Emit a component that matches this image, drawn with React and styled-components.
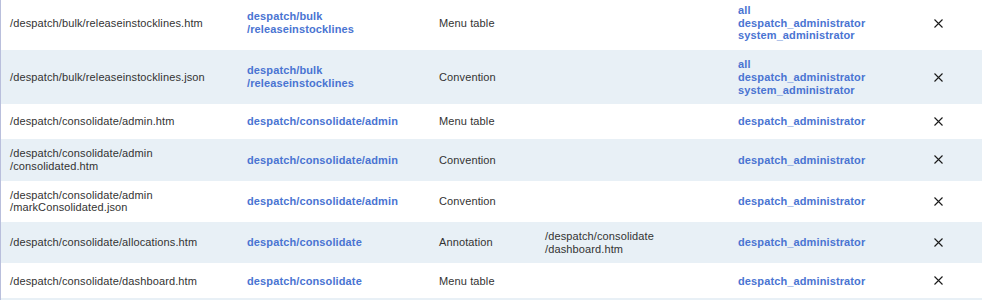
import React from 'react';
import styled, { createGlobalStyle } from 'styled-components';

const GlobalStyle = createGlobalStyle`
  html, body {
    margin: 0;
    padding: 0;
    background: #ffffff;
    overflow: hidden;
  }
  body {
    font-family: 'Liberation Sans', Arial, sans-serif;
    font-size: 11px;
    color: #333333;
  }
`;

const TableWrap = styled.div`
  margin-top: -4px;
  border-left: 1px solid #b9bfdc;
`;

const Table = styled.table`
  width: 100%;
  border-collapse: collapse;
  table-layout: fixed;
`;

const Col = styled.col`
  width: ${props => props.w}px;
`;

const Row = styled.tr`
  background: ${props => (props.striped ? '#e8f0f6' : '#ffffff')};
`;

const Cell = styled.td`
  padding: 8px 9px;
  vertical-align: middle;
  line-height: 12.7px;
  height: 19px;
  color: #333333;
  letter-spacing: 0.12px;
`;

const LinkCell = styled(Cell)`
  color: #4a74d2;
  font-weight: bold;
`;

const IconCell = styled(Cell)`
  text-align: center;
`;

const CrossSvg = styled.svg`
  display: block;
  margin: 0 auto;
`;

const CrossIcon = () => (
  <CrossSvg width="9" height="9" viewBox="0 0 9 9">
    <path d="M0.5 0.5 L8.5 8.5 M8.5 0.5 L0.5 8.5" stroke="#1a1a1a" strokeWidth="1.1" fill="none" />
  </CrossSvg>
);

const rows = [
  {
    url: ['/despatch/bulk/releaseinstocklines.htm'],
    perm: ['despatch/bulk', '/releaseinstocklines'],
    source: 'Menu table',
    target: [],
    roles: ['all', 'despatch_administrator', 'system_administrator'],
  },
  {
    url: ['/despatch/bulk/releaseinstocklines.json'],
    perm: ['despatch/bulk', '/releaseinstocklines'],
    source: 'Convention',
    target: [],
    roles: ['all', 'despatch_administrator', 'system_administrator'],
  },
  {
    url: ['/despatch/consolidate/admin.htm'],
    perm: ['despatch/consolidate/admin'],
    source: 'Menu table',
    target: [],
    roles: ['despatch_administrator'],
  },
  {
    url: ['/despatch/consolidate/admin', '/consolidated.htm'],
    perm: ['despatch/consolidate/admin'],
    source: 'Convention',
    target: [],
    roles: ['despatch_administrator'],
  },
  {
    url: ['/despatch/consolidate/admin', '/markConsolidated.json'],
    perm: ['despatch/consolidate/admin'],
    source: 'Convention',
    target: [],
    roles: ['despatch_administrator'],
  },
  {
    url: ['/despatch/consolidate/allocations.htm'],
    perm: ['despatch/consolidate'],
    source: 'Annotation',
    target: ['/despatch/consolidate', '/dashboard.htm'],
    roles: ['despatch_administrator'],
  },
  {
    url: ['/despatch/consolidate/dashboard.htm'],
    perm: ['despatch/consolidate'],
    source: 'Menu table',
    target: [],
    roles: ['despatch_administrator'],
  },
];

const Lines = ({ items }) =>
  items.map((t, i) => (
    <React.Fragment key={i}>
      {i > 0 && <br />}
      {t}
    </React.Fragment>
  ));

export default function App() {
  return (
    <>
      <GlobalStyle />
      <TableWrap>
        <Table>
          <colgroup>
            <Col w={237} />
            <Col w={192} />
            <Col w={106} />
            <Col w={193} />
            <Col w={165} />
            <Col w={88} />
          </colgroup>
          <tbody>
            {rows.map((r, i) => (
              <Row key={i} striped={i % 2 === 1}>
                <Cell><Lines items={r.url} /></Cell>
                <LinkCell><Lines items={r.perm} /></LinkCell>
                <Cell>{r.source}</Cell>
                <Cell><Lines items={r.target} /></Cell>
                <LinkCell><Lines items={r.roles} /></LinkCell>
                <IconCell><CrossIcon /></IconCell>
              </Row>
            ))}
            <Row striped>
              <Cell />
              <Cell />
              <Cell />
              <Cell />
              <Cell />
              <Cell />
            </Row>
          </tbody>
        </Table>
      </TableWrap>
    </>
  );
}
